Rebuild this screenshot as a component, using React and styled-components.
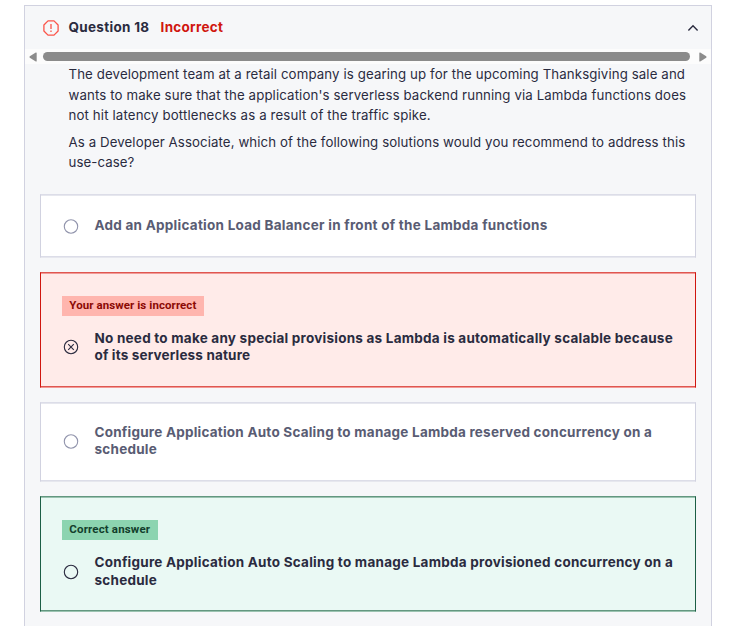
import React from "react";
import styled, { createGlobalStyle, css } from "styled-components";

const GlobalStyle = createGlobalStyle`
  * { box-sizing: border-box; }
  html, body { margin: 0; background: #fff; overflow: hidden; }
`;

const Page = styled.main`
  height: 626px;
  padding: 5px 29px 0 24px;
  overflow: hidden;
  color: #2a2b3f;
`;

const Panel = styled.section`
  height: 640px;
  border: 1px solid #d1d2e0;
  background: #f6f7f9;
`;

const Header = styled.header`
  display: flex;
  align-items: center;
  height: 43px;
  padding: 0 12px 0 18px;
`;

const AlertIcon = styled.svg`
  width: 16px;
  height: 16px;
  margin: 1px 9.5px 0 0;
  fill: none;
  stroke: #fb5449;
`;

const Title = styled.h2`
  margin: 0 11.2px 2px 0;
  font: 700 13.5px/20px Inter, sans-serif;
  letter-spacing: 0.3px;
`;

const Status = styled.span`
  flex: 1;
  margin-bottom: 2px;
  color: #d0160f;
  font: 700 13.5px/20px Inter, sans-serif;
  letter-spacing: 0.27px;
`;

const Chevron = styled.svg`
  width: 12px;
  height: 8px;
  margin-top: 1px;
  fill: none;
  stroke: #2a2b3f;
  stroke-width: 1.4;
`;

const ScrollBar = styled.div`
  display: flex;
  align-items: center;
  height: 15px;
  padding: 0 4px;
  background: #fcfcfc;
`;

const ScrollArrow = styled.svg`
  flex: none;
  width: 8px;
  height: 10px;
  fill: #8b8b8b;
`;

const ScrollThumb = styled.div`
  flex: 1;
  height: 9px;
  margin: 0 9px 0 6px;
  border-radius: 5px;
  background: #8b8b8b;
`;

const Prompt = styled.div`
  display: flex;
  flex-direction: column;
  gap: 6.5px;
  height: 130px;
  padding-left: 43.5px;
`;

const Paragraph = styled.p`
  margin: 0;
  font: 400 13.25px/20.5px Inter, sans-serif;
  white-space: nowrap;

  & + & {
    line-height: 20px;
  }
`;

const Line = styled.span`
  display: block;
  letter-spacing: ${(p) => p.$track}px;
`;

const Answers = styled.div`
  display: flex;
  flex-direction: column;
  gap: 14px;
  padding: 0 15px;
`;

const tones = {
  plain: css`
    --edge: #d1d2e0;
    --top: #dcdde8;
    --soft: #e6e7ee;
    --fill: #fff;
    --text: #595c73;
    --ring: #9194ac;
  `,
  wrong: css`
    --edge: #d0160f;
    --top: #df5650;
    --soft: #f29a97;
    --fill: #ffebe9;
    --text: #2a2b3f;
    --ring: #2a2b3f;
    --badge: #ffb5ae;
    --badgeText: #8b0904;
  `,
  correct: css`
    --edge: #1c5f45;
    --top: #639780;
    --soft: #9bc3b1;
    --fill: #eaf9f4;
    --text: #2a2b3f;
    --ring: #2a2b3f;
    --badge: #8cd4b0;
    --badgeText: #123e2c;
  `,
};

const Card = styled.article`
  ${(p) => tones[p.$tone]}
  display: flex;
  flex-direction: column;
  height: ${(p) => p.$height}px;
  padding: ${(p) => p.$top}px 20px 0 21px;
  border: 1px solid var(--edge);
  border-top-color: var(--top);
  border-bottom-color: var(--soft);
  box-shadow: inset 0 1px var(--soft), inset 0 -1px var(--top);
  background: var(--fill);
`;

const Badge = styled.span`
  align-self: flex-start;
  width: ${(p) => p.$width}px;
  height: 20px;
  margin-bottom: ${(p) => p.$gap}px;
  padding-left: 7.3px;
  background: var(--badge);
  color: var(--badgeText);
  font: 700 11.5px/18px Roboto, sans-serif;
  letter-spacing: ${(p) => p.$track}px;
  white-space: nowrap;
`;

const Choice = styled.div`
  display: flex;
  align-items: center;
`;

const Radio = styled.svg`
  flex: none;
  width: 16px;
  height: 16px;
  margin: ${(p) => p.$shift}px 15.5px 0 1px;
  fill: none;
  stroke: var(--ring);
  stroke-width: 1.1;
`;

const AnswerText = styled.div`
  color: var(--text);
  font: 700 13.5px/17.5px Inter, sans-serif;
  line-height: ${(p) => p.$leading}px;
  white-space: nowrap;
`;

const answers = [
  {
    tone: "plain", height: 64, top: 22, shift: 2, leading: 17.5,
    lines: [["Add an Application Load Balancer in front of the Lambda functions", 0.26]],
  },
  {
    tone: "wrong", height: 116, top: 23, shift: 0, leading: 17, crossed: true,
    badge: { text: "Your answer is incorrect", width: 142, track: 0.08, gap: 14 },
    lines: [
      ["No need to make any special provisions as Lambda is automatically scalable because", 0.23],
      ["of its serverless nature", 0.16],
    ],
  },
  {
    tone: "plain", height: 80, top: 21, shift: 1, leading: 17,
    lines: [
      ["Configure Application Auto Scaling to manage Lambda reserved concurrency on a", 0.225],
      ["schedule", 0.25],
    ],
  },
  {
    tone: "correct", height: 116, top: 23, shift: 2, leading: 18,
    badge: { text: "Correct answer", width: 96, track: 0.16, gap: 13 },
    lines: [
      ["Configure Application Auto Scaling to manage Lambda provisioned concurrency on a", 0.24],
      ["schedule", 0.25],
    ],
  },
];

const prompt = [
  [
    ["The development team at a retail company is gearing up for the upcoming Thanksgiving sale and", 0.11],
    ["wants to make sure that the application's serverless backend running via Lambda functions does", 0.12],
    ["not hit latency bottlenecks as a result of the traffic spike.", 0.135],
  ],
  [
    ["As a Developer Associate, which of the following solutions would you recommend to address this", 0.095],
    ["use-case?", 0.06],
  ],
];

const Lines = ({ items }) =>
  items.map(([text, track]) => (
    <Line key={text} $track={track}>{text}</Line>
  ));

export default function App() {
  return (
    <Page>
      <GlobalStyle />
      <Panel>
        <Header>
          <AlertIcon viewBox="0 0 16 16">
            <path d="M5 .9h6L15.1 5v6L11 15.1H5L.9 11V5z" strokeWidth="1.3" strokeLinejoin="round" />
            <path d="M8 4v5M8 10.5v1.5" strokeWidth="1.3" />
          </AlertIcon>
          <Title>Question 18</Title>
          <Status>Incorrect</Status>
          <Chevron viewBox="0 0 12 8">
            <path d="M1.4 6.4 6 1.8l4.6 4.6" />
          </Chevron>
        </Header>
        <ScrollBar>
          <ScrollArrow viewBox="0 0 8 10">
            <path d="M6.8 .5q.9-.3.9.6v7.8q0 .9-.9.6L.8 5.7q-.8-.7 0-1.4z" />
          </ScrollArrow>
          <ScrollThumb />
          <ScrollArrow viewBox="0 0 8 10">
            <path d="M1.2 .5Q.3.2.3 1.1v7.8q0 .9.9.6l6-3.8q.8-.7 0-1.4z" />
          </ScrollArrow>
        </ScrollBar>
        <Prompt>
          {prompt.map((items) => (
            <Paragraph key={items[0][0]}>
              <Lines items={items} />
            </Paragraph>
          ))}
        </Prompt>
        <Answers>
          {answers.map((a) => (
            <Card key={a.lines[0][0]} $tone={a.tone} $height={a.height} $top={a.top}>
              {a.badge && (
                <Badge $width={a.badge.width} $track={a.badge.track} $gap={a.badge.gap}>
                  {a.badge.text}
                </Badge>
              )}
              <Choice>
                <Radio viewBox={a.tone === "plain" ? "0 0.5 16 16" : "0 0 16 16"} $shift={a.shift}>
                  <circle cx="8" cy="8" r="6.7" />
                  {a.crossed && <path d="m5.2 5.2 5.6 5.6M10.8 5.2l-5.6 5.6" />}
                </Radio>
                <AnswerText $leading={a.leading}>
                  <Lines items={a.lines} />
                </AnswerText>
              </Choice>
            </Card>
          ))}
        </Answers>
      </Panel>
    </Page>
  );
}
